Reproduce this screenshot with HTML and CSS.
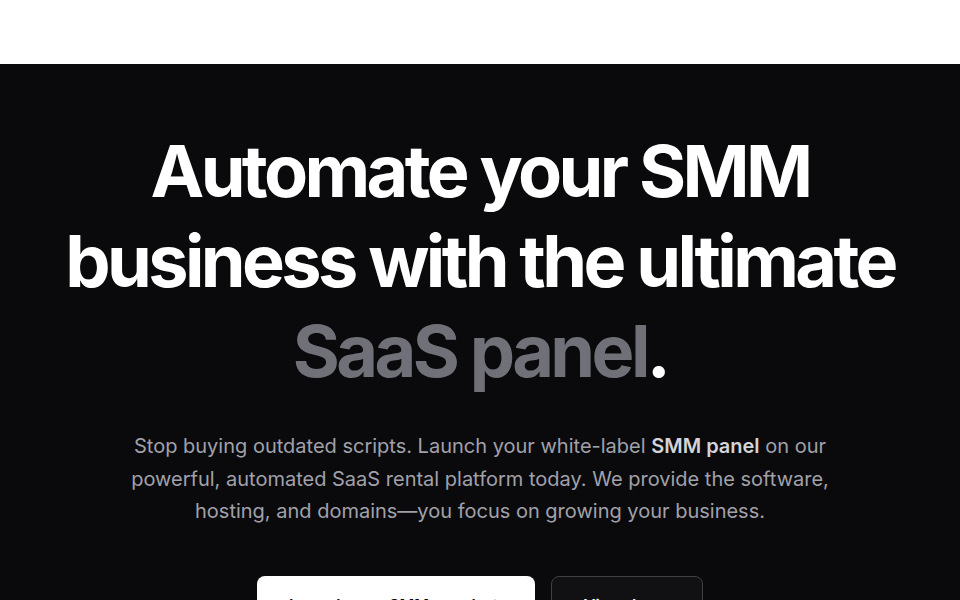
FILE: index.html
```html
<!DOCTYPE html>
<html lang="en">
<head>
<meta charset="utf-8">
<title>SMM Panel SaaS</title>
<link rel="stylesheet" href="styles.css">
</head>
<body>
<header class="topbar"></header>
<section class="hero">
  <h1 class="hero-title">Automate your SMM business with the ultimate <span class="muted">SaaS panel</span>.</h1>
  <p class="hero-text">Stop buying outdated scripts. Launch your white-label <strong>SMM panel</strong> on our powerful, automated SaaS rental platform today. We provide the software, hosting, and domains—you focus on growing your business.</p>
  <div class="actions">
    <a class="btn btn-primary" href="#">Launch your SMM panel
      <svg class="arrow" viewBox="0 0 24 24" width="16" height="16" fill="none" stroke="currentColor" stroke-width="2" stroke-linecap="round" stroke-linejoin="round"><path d="M5 12h14"/><path d="M12 5l7 7-7 7"/></svg>
    </a>
    <a class="btn btn-secondary" href="#">View demo</a>
  </div>
</section>
</body>
</html>
```
FILE: styles.css
```css
* { box-sizing: border-box; }
html, body { margin: 0; padding: 0; }
body {
  font-family: Inter, "Noto Sans", "Liberation Sans", sans-serif;
  background: #0a0a0c;
  overflow: hidden;
}
.topbar {
  height: 64px;
  background: #ffffff;
}
.hero {
  background: #0a0a0c;
  padding: 62px 24px 80px;
  display: flex;
  flex-direction: column;
  align-items: center;
  text-align: center;
}
.hero-title {
  margin: 0;
  font-size: 72px;
  line-height: 90px;
  font-weight: 700;
  letter-spacing: -0.05em;
  color: #ffffff;
  max-width: 880px;
}
.muted { color: #707078; }
.hero-text {
  margin: 34px 0 0;
  max-width: 720px;
  font-size: 20px;
  line-height: 32.5px;
  color: #a1a1aa;
  font-weight: 400;
}
.hero-text strong { color: #d4d4d8; font-weight: 600; }
.actions {
  margin-top: 48px;
  display: flex;
  gap: 16px;
}
.btn {
  display: inline-flex;
  align-items: center;
  justify-content: center;
  gap: 8px;
  padding: 16px 32px;
  border-radius: 8px;
  font-size: 16px;
  line-height: 24px;
  font-weight: 600;
  text-decoration: none;
  white-space: nowrap;
}
.btn-primary {
  background: #ffffff;
  color: #0a0a0c;
  gap: 11px;
}
.btn-secondary {
  background: #111113;
  color: #ffffff;
  border: 1px solid #3f3f46;
}
.arrow { flex: none; }
```
